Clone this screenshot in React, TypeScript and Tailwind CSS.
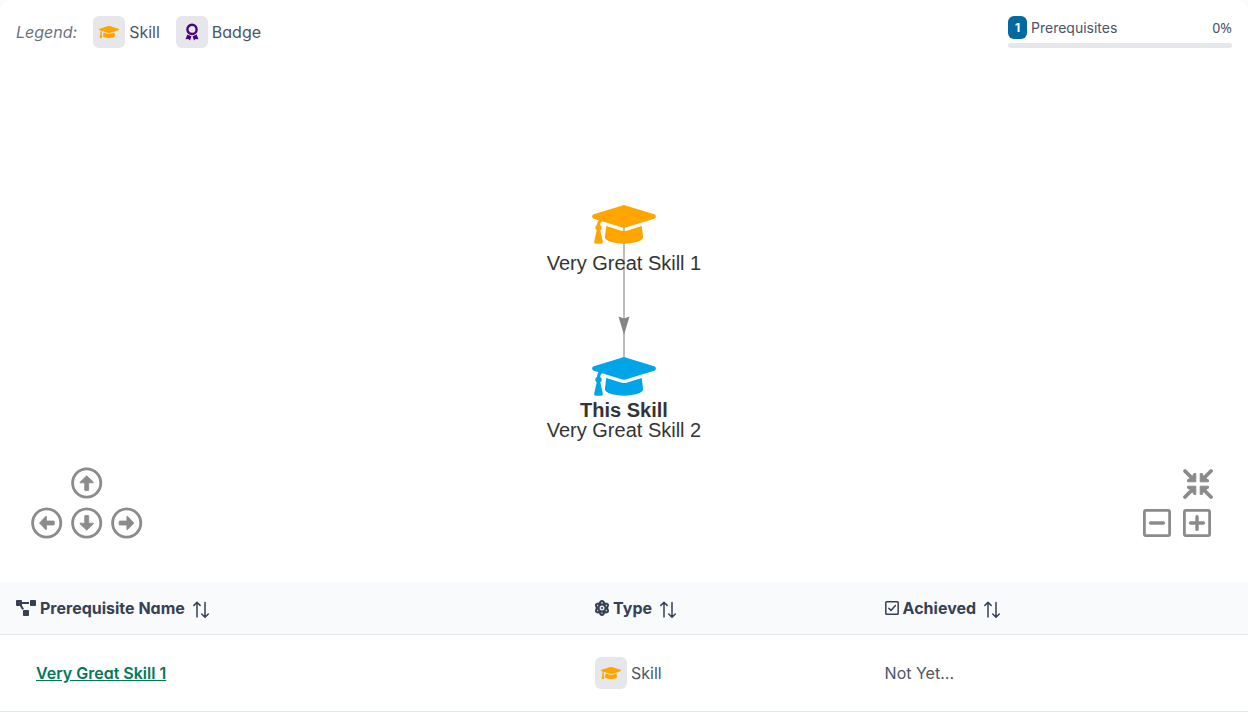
import React from "react";
import { FaAtom, FaGraduationCap, FaProjectDiagram } from "react-icons/fa";

const tile = "flex h-8 w-8 shrink-0 items-center justify-center rounded-md bg-gray-200";

function SkillTile() {
  return (
    <span className={tile}>
      <FaGraduationCap className="h-4 w-5 text-[#ffa500]" />
    </span>
  );
}

function BadgeIcon() {
  return (
    <svg viewBox="0 0 14 18" className="h-[18px] w-[14px] text-[#4b0082]" fill="currentColor">
      <circle cx="7" cy="6.4" r="4.6" fill="none" stroke="currentColor" strokeWidth="2.4" />
      <path d="M2.4 11.6L6.4 13.3L5 17.4L3.4 15.9L0.5 16.2Z" />
      <path d="M11.6 11.6L7.6 13.3L9 17.4L10.6 15.9L13.5 16.2Z" />
    </svg>
  );
}

function SortIcon() {
  return (
    <svg viewBox="0 0 16 18" className="mt-1 h-[18px] w-4" fill="none" stroke="currentColor" strokeWidth="1.5" strokeLinecap="round" strokeLinejoin="round">
      <path d="M4 16V1.5M0.9 4.4L4 1.3L7.1 4.4M12 1.5V16M8.7 13L12 16.2L15.3 13" />
    </svg>
  );
}

function CheckIcon() {
  return (
    <svg viewBox="0 0 14 14" className="h-[14px] w-[14px]" fill="none" stroke="currentColor" strokeWidth="1.5" strokeLinecap="round" strokeLinejoin="round">
      <rect x="0.8" y="0.8" width="12.4" height="12.4" rx="0.8" />
      <path d="M3.8 7.2L6 9.4L10.4 4.6" />
    </svg>
  );
}

function PanButton({ label, angle }: { label: string; angle: number }) {
  return (
    <button type="button" aria-label={label} className="h-8 w-8">
      <svg viewBox="0 0 32 32" className="h-8 w-8">
        <circle cx="15.7" cy="16" r="14.1" fill="none" stroke="#8b8b8b" strokeWidth="2.8" />
        <path
          d="M16 8.8L22.6 15V15.8H18V23Q18 23.6 17.2 23.6H14.8Q14 23.6 14 23V15.8H9.4V15Z"
          fill="#8b8b8b"
          stroke="#8b8b8b"
          strokeWidth="0.8"
          strokeLinejoin="round"
          transform={`translate(-0.3 0) rotate(${angle} 16 16)`}
        />
      </svg>
    </button>
  );
}

function ZoomButton({ label, plus }: { label: string; plus: boolean }) {
  return (
    <button type="button" aria-label={label} className="h-8 w-8">
      <svg viewBox="0 0 32 32" className="h-8 w-8" fill="none" stroke="#8b8b8b">
        <rect x="3.4" y="3.4" width="25.2" height="25.2" rx="1.5" strokeWidth="2.8" />
        <path d={plus ? "M9.6 16H22.4M16 9.6V22.4" : "M9.6 16H22.4"} strokeWidth="3.4" strokeLinecap="round" />
      </svg>
    </button>
  );
}

function FitButton() {
  return (
    <button type="button" aria-label="Fit graph" className="col-start-2 h-8 w-8">
      <svg viewBox="0 0 32 32" className="h-8 w-8" fill="#8b8b8b" stroke="#8b8b8b">
        {[0, 90, 180, 270].map((angle) => (
          <g key={angle} transform={`rotate(${angle} 17 17)`}>
            <path d="M4 4L11 11" strokeWidth="3.8" strokeLinecap="round" />
            <path d="M14.8 6.6V14.8H6.6V12.8L8.4 12L12 8.4L12.8 6.6Z" strokeWidth="1" strokeLinejoin="round" />
          </g>
        ))}
      </svg>
    </button>
  );
}

function GraphNode({ color }: { color: string }) {
  return <FaGraduationCap className="h-[51px] w-16" style={{ color }} />;
}

function Header({ icon, label, className }: { icon: React.ReactNode; label: string; className: string }) {
  return (
    <th scope="col" aria-sort="none" className={`h-[53px] border-b border-gray-200 px-4 text-left font-bold text-gray-700 ${className}`}>
      <button type="button" className="flex items-center gap-2">
        <span className="flex items-center gap-1">
          {icon}
          {label}
        </span>
        <SortIcon />
      </button>
    </th>
  );
}

export default function App() {
  return (
    <div className="bg-gray-50">
      <main className="overflow-hidden rounded-t-xl bg-white font-['Inter',sans-serif] text-base text-gray-600 [font-feature-settings:'cv02','cv03','cv04','cv11']">
        <header className="flex items-start justify-between px-4 pt-4">
          <div className="flex items-center gap-4">
            <span className="italic text-gray-500">Legend:</span>
            <span className="flex items-center gap-1">
              <SkillTile />
              Skill
            </span>
            <span className="flex items-center gap-1">
              <span className={tile}>
                <BadgeIcon />
              </span>
              Badge
            </span>
          </div>
          <div className="w-56">
            <div className="flex items-center justify-between text-sm">
              <span className="flex items-center gap-1">
                <span className="flex h-[23px] w-[19px] items-center justify-center rounded-md bg-[#0369a1] text-xs font-bold text-white">1</span>
                Prerequisites
              </span>
              <span className="font-['Noto_Sans',sans-serif]">0%</span>
            </div>
            <div role="progressbar" aria-label="Prerequisites" aria-valuenow={0} aria-valuemin={0} aria-valuemax={100} className="mt-1 h-[5px] rounded-full bg-gray-200" />
          </div>
        </header>

        <section aria-label="Prerequisite graph" className="relative h-[534px] font-['Liberation_Sans',sans-serif] text-xl leading-5 text-[#343434]">
          <div className="relative flex flex-col items-center pt-[151px]">
            <svg viewBox="0 0 12 152" className="absolute top-44 left-1/2 h-[152px] w-3 -translate-x-1/2">
              <path d="M6 0V152" stroke="#bdbdbd" strokeWidth="2" />
              <path d="M0.5 92.5L6 94.5L11.5 92.5L6 111Z" fill="#848484" />
            </svg>
            <div className="relative flex flex-col items-center">
              <GraphNode color="#ffa500" />
              <span className="mt-[3px]">Very Great Skill 1</span>
            </div>
            <div className="relative mt-[78px] flex flex-col items-center">
              <GraphNode color="#00a4e8" />
              <strong className="-mt-0.5">This Skill</strong>
              <span>Very Great Skill 2</span>
            </div>
          </div>
          <div className="absolute bottom-[43px] left-[31px] grid grid-cols-3 gap-2">
            <span className="col-start-2 flex">
              <PanButton label="Pan up" angle={0} />
            </span>
            <span className="col-start-1 flex">
              <PanButton label="Pan left" angle={270} />
            </span>
            <PanButton label="Pan down" angle={180} />
            <PanButton label="Pan right" angle={90} />
          </div>
          <div className="absolute right-[35px] bottom-[43px] grid grid-cols-2 gap-2">
            <FitButton />
            <ZoomButton label="Zoom out" plus={false} />
            <ZoomButton label="Zoom in" plus />
          </div>
        </section>

        <table className="w-full border-separate border-spacing-0">
          <thead className="bg-[#f8fafc]">
            <tr>
              <Header className="w-[46.4%]" icon={<FaProjectDiagram className="h-4 w-5" />} label="Prerequisite Name" />
              <Header className="w-[23.2%]" icon={<FaAtom className="h-4 w-[14px]" strokeWidth="6" />} label="Type" />
              <Header className="" icon={<CheckIcon />} label="Achieved" />
            </tr>
          </thead>
          <tbody>
            <tr>
              <td className="h-[77px] border-b border-gray-200 pr-4 pl-9">
                <a href="#skill-1" className="font-semibold text-[#047857] underline">Very Great Skill 1</a>
              </td>
              <td className="border-b border-gray-200 px-4">
                <span className="flex items-center gap-1">
                  <SkillTile />
                  Skill
                </span>
              </td>
              <td className="border-b border-gray-200 px-4">Not Yet...</td>
            </tr>
          </tbody>
        </table>
      </main>
    </div>
  );
}
